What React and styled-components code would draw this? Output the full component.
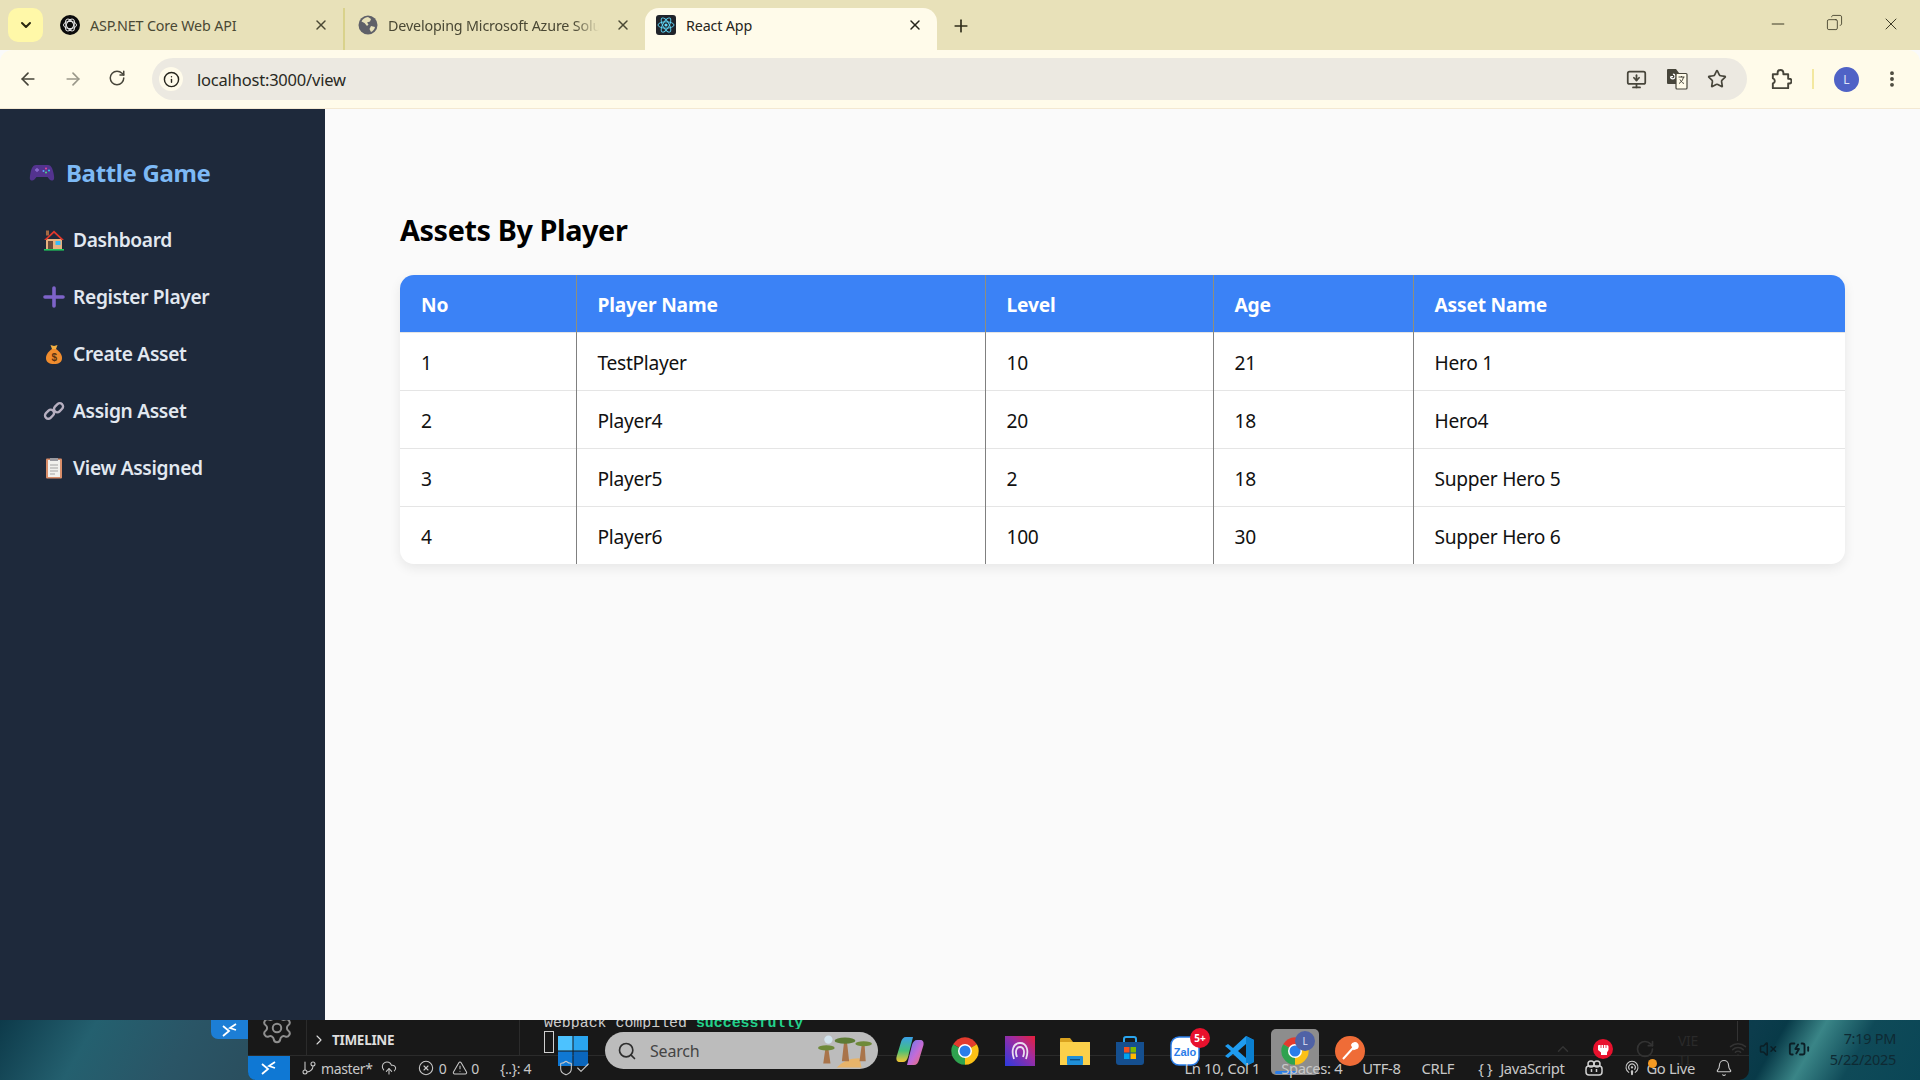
import styled, { createGlobalStyle } from 'styled-components'
import {
  ArrowLeft, ArrowRight, RotateCw, Info, Plus, X, Minus, Star, EllipsisVertical, MonitorDown,
  Search, Bell, GitBranch, CloudUpload, CircleX, TriangleAlert, ChevronRight, ChevronDown, Settings,
  Check, Shield, Podcast, VolumeX, Wifi, BatteryCharging, ChevronUp, Copy,
} from 'lucide-react'

const GlobalStyle = createGlobalStyle`
  html, body { margin: 0; padding: 0; }
  body { font-family: "Noto Sans", "Liberation Sans", sans-serif; background: #fafafa; }
`

const Screen = styled.div`
  width: 1920px;
  height: 1080px;
  display: flex;
  flex-direction: column;
  overflow: hidden;
`

/* ---------- browser chrome ---------- */

const TabStrip = styled.div`
  height: 50px;
  flex: none;
  background: #e8e1b9;
  display: flex;
  align-items: flex-end;
  padding-left: 8px;
  position: relative;
`

const TabList = styled.button`
  width: 35px;
  height: 34px;
  margin-bottom: 8px;
  border: 0;
  padding: 0;
  border-radius: 10px;
  background: #fff8a8;
  color: #29270f;
  display: flex;
  align-items: center;
  justify-content: center;
`

const Tab = styled.div`
  width: ${p => p.$w}px;
  height: 42px;
  margin-left: ${p => p.$ml || 0}px;
  box-sizing: border-box;
  padding: 0 14px 8px ${p => p.$pl || 0}px;
  display: flex;
  align-items: center;
  background: ${p => (p.$active ? '#fffbea' : 'transparent')};
  border-radius: ${p => (p.$active ? '14px 14px 0 0' : '0')};
  border-right: ${p => (p.$sep ? '2px solid #d9d28c' : '0')};
  font-size: 14.3px;
  color: ${p => (p.$active ? '#26251c' : '#4a4834')};
`

const TabLabel = styled.span`
  flex: 1;
  margin: 0 ${p => (p.$fade ? 16 : 0)}px 0 10px;
  white-space: nowrap;
  overflow: hidden;
  letter-spacing: -0.15px;
  ${p => p.$fade && 'mask-image: linear-gradient(to right, #000 88%, transparent);'}
`

const TabFavicon = styled.span`
  width: 20px;
  height: 20px;
  flex: none;
  display: flex;
  align-items: center;
  justify-content: center;
`

const NewTab = styled.span`
  margin: 0 0 14px 14px;
  height: 20px;
  color: #2f2d1a;
  display: flex;
`

const WindowControls = styled.div`
  position: absolute;
  right: 19px;
  top: 14px;
  display: flex;
  gap: 38px;
  color: #3c3a26;
`

const Toolbar = styled.div`
  height: 58px;
  flex: none;
  background: #fffbea;
  border-bottom: 1px solid #f3e8d2;
  border-radius: 12px 12px 0 0;
  display: flex;
  align-items: center;
  padding: 0 16px 0 18px;
  color: #47453a;
`

const NavButton = styled.span`
  width: 20px;
  height: 20px;
  margin-right: ${p => p.$mr || 25}px;
  display: flex;
  color: ${p => p.$dim ? '#9a988a' : '#47453a'};
`

const Omnibox = styled.div`
  flex: none;
  width: 1595px;
  height: 42px;
  margin-left: -3px;
  box-sizing: border-box;
  padding: 0 20px 0 7px;
  background: #ece9e1;
  border-radius: 21px;
  display: flex;
  align-items: center;
`

const SiteInfo = styled.span`
  width: 24px;
  height: 24px;
  background: #fffbea;
  border-radius: 50%;
  display: flex;
  align-items: center;
  justify-content: center;
  color: #26251c;
`

const Url = styled.span`
  flex: 1;
  margin-left: 14px;
  font-size: 16.5px;
  letter-spacing: -0.2px;
  color: #2a291f;
`

const OmniActions = styled.div`
  display: flex;
  gap: 19px;
  align-items: center;
`

const ToolbarEnd = styled.div`
  display: flex;
  align-items: center;
  margin-left: 22px;
  gap: 20px;
`

const Divider = styled.span`
  width: 2px;
  height: 20px;
  background: #f3e8a0;
`

const Avatar = styled.span`
  width: 25px;
  height: 25px;
  border-radius: 50%;
  background: #4f62c6;
  color: #dfe3f7;
  font-size: 12px;
  display: flex;
  align-items: center;
  justify-content: center;
`

const MenuDots = styled.span`
  margin-left: 3px;
  height: 20px;
  display: flex;
`

/* ---------- page ---------- */

const Page = styled.div`
  height: 911px;
  flex: none;
  display: flex;
  overflow: hidden;
`

const Sidebar = styled.aside`
  width: 325px;
  flex: none;
  background: #1e293b;
  box-sizing: border-box;
  padding: 43px 0 0 29px;
`

const Brand = styled.h2`
  margin: 0 0 19px;
  height: 40px;
  display: flex;
  align-items: center;
  gap: 11px;
  font-size: 24px;
  font-weight: 700;
  letter-spacing: -0.35px;
  color: #7db9f5;
`

const Nav = styled.nav`
  display: flex;
  flex-direction: column;
  padding-left: 14px;
`

const NavItem = styled.a`
  height: 57px;
  display: flex;
  align-items: center;
  gap: 8px;
  font-size: 19.2px;
  font-weight: 600;
  letter-spacing: -0.33px;
  color: #e2e8f0;
`

const NavIcon = styled.svg`
  width: 22px;
  height: 22px;
  flex: none;
`

const Main = styled.main`
  flex: 1;
  background: #fafafa;
  padding: 101px 75px 0;
`

const Heading = styled.h1`
  margin: 0 0 25px;
  height: 40px;
  line-height: 40px;
  font-size: 28.8px;
  font-weight: 700;
  letter-spacing: -0.4px;
  color: #000;
`

const TableCard = styled.div`
  width: 1445px;
  background: #fff;
  border-radius: 14px;
  overflow: hidden;
  box-shadow: 0 4px 12px rgba(0, 0, 0, 0.08);
`

const Table = styled.table`
  width: 100%;
  table-layout: fixed;
  border-collapse: collapse;
  font-size: 19.2px;
  letter-spacing: -0.3px;
`

const Th = styled.th`
  width: ${p => p.$w}px;
  height: 57px;
  box-sizing: border-box;
  padding: 2px 21px 0;
  text-align: left;
  font-weight: 700;
  letter-spacing: -0.2px;
  color: #fff;
  background: #3b82f6;
  border-left: ${p => (p.$first ? '0' : '1px solid #8f8f7c')};
`

const Td = styled.td`
  height: 58px;
  box-sizing: border-box;
  padding: 2px 21px 0;
  color: #111;
  border-top: 1px solid #e5e5e5;
  border-left: ${p => (p.$first ? '0' : '1px solid #808080')};
`

/* ---------- taskbar + vs code window behind it ---------- */

const Desktop = styled.div`
  height: 60px;
  flex: none;
  position: relative;
  display: flex;
  background: linear-gradient(120deg, #0d3a4a 0%, #24606f 5%, #2a5566 10%, #2a4f5f 14%, #0c3c4c 90%, #083a48 91.5%, #3a8587 93.5%, #0f4a58 96%, #0a4656 100%);
`

const VsCode = styled.div`
  width: 1501px;
  height: 60px;
  margin-left: 248px;
  background: #181818;
  border-radius: 0 0 10px 10px;
  display: flex;
  flex-direction: column;
  position: relative;
`

const RemoteTab = styled.div`
  position: absolute;
  left: -37px;
  top: 0;
  width: 37px;
  height: 19px;
  background: #1c7ed6;
  border-radius: 0 0 0 7px;
  color: #fff;
  display: flex;
  align-items: center;
  justify-content: center;
`

const Panels = styled.div`
  height: 35px;
  flex: none;
  display: flex;
  position: relative;
  border-bottom: 1px solid #2b2b2b;
`

const ActivityBar = styled.div`
  width: 58px;
  flex: none;
  box-sizing: border-box;
  padding: 0 0 0 12px;
  color: #8f8f8f;
  overflow: hidden;
`

const Gear = styled(Settings)`
  margin-top: -9px;
`

const SideSection = styled.div`
  width: 214px;
  flex: none;
  box-sizing: border-box;
  padding: 12px 0 0 4px;
  display: flex;
  align-items: flex-start;
  gap: 5px;
  border-left: 1px solid #2b2b2b;
  border-right: 1px solid #2b2b2b;
  color: #ddd;
  font-size: 13.5px;
  line-height: 16px;
  font-weight: 700;
  letter-spacing: -0.3px;
`

const Terminal = styled.div`
  flex: 1;
  padding-left: 24px;
  font-family: "Liberation Mono", monospace;
  font-size: 14.9px;
  color: #ccc;
`

const TerminalLine = styled.div`
  height: 9px;
  line-height: 6px;
  overflow: hidden;
`

const TerminalCursor = styled.div`
  width: 8px;
  height: 20px;
  margin-top: 2px;
  border: 1px solid #cfcfcf;
`

const Success = styled.b`
  color: #23d18b;
`

const StatusBar = styled.div`
  flex: 1;
  position: relative;
  z-index: 2;
  display: flex;
  align-items: center;
  justify-content: space-between;
  padding-right: 16px;
  font-size: 14px;
  letter-spacing: -0.35px;
  color: #c8c8c8;
`

const StatusGroup = styled.div`
  display: flex;
  align-items: center;
  height: 100%;
  font-size: ${p => p.$size || 14}px;
`

const RemoteButton = styled.span`
  width: 42px;
  height: 100%;
  background: #0f78d4;
  border-radius: 0 0 0 8px;
  color: #fff;
  display: flex;
  align-items: center;
  justify-content: center;
`

const StatusItem = styled.span`
  margin-left: ${p => p.$ml || 0}px;
  display: flex;
  align-items: center;
  gap: ${p => p.$gap || 4}px;
  white-space: nowrap;
`

const TaskIcons = styled.div`
  position: absolute;
  left: 558px;
  top: 12px;
  height: 37px;
  display: flex;
  align-items: center;
  gap: 25px;
`

const StartIcon = styled.svg`
  width: 30px;
  height: 30px;
  margin-right: -8px;
`

const SearchPill = styled.div`
  width: 273px;
  height: 37px;
  box-sizing: border-box;
  padding: 0 4px 0 12px;
  margin-right: -8px;
  border-radius: 19px;
  background: #bcbcbc;
  color: #2e2e2e;
  display: flex;
  align-items: center;
  gap: 13px;
  font-size: 16px;
  letter-spacing: -0.2px;
`

const SearchText = styled.span`
  flex: 1;
  color: #444;
`

const AppIcon = styled.span`
  width: 30px;
  height: 30px;
  flex: none;
  position: relative;
  display: flex;
  align-items: center;
  justify-content: center;
`

const ActiveTile = styled(AppIcon)`
  &::before {
    content: '';
    position: absolute;
    inset: -7px -9px -9px;
    background: #8d8d8d;
    border-radius: 5px;
  }
  &::after {
    content: '';
    position: absolute;
    left: -5px;
    bottom: -8px;
    width: 22px;
    height: 3px;
    border-radius: 2px;
    background: #2a7de9;
  }
  & > * { position: relative; }
`

const CountBadge = styled.span`
  position: absolute;
  top: -8px;
  right: -10px;
  width: 20px;
  height: 20px;
  border-radius: 50%;
  background: #e8112d;
  color: #fff;
  font-size: 10px;
  font-weight: 700;
  display: flex;
  align-items: center;
  justify-content: center;
`

const ProfileBadge = styled.span`
  position: absolute !important;
  top: -5px;
  right: -5px;
  width: 20px;
  height: 20px;
  border-radius: 50%;
  background: #4f62a6;
  color: #dfe3f7;
  font-size: 10px;
  display: flex;
  align-items: center;
  justify-content: center;
`

const Tray = styled.div`
  position: absolute;
  right: 24px;
  top: 10px;
  height: 38px;
  z-index: 3;
  display: flex;
  align-items: center;
  color: #0b1f26;
`

const TraySlot = styled.span`
  position: relative;
  margin-left: ${p => p.$ml || 0}px;
  display: flex;
  color: ${p => p.$dim ? '#333' : '#0b1f26'};
`

const OrangeDot = styled.span`
  position: absolute;
  right: -2px;
  bottom: -9px;
  width: 9px;
  height: 9px;
  border-radius: 50%;
  background: #f59a23;
`

const WifiLine = styled.span`
  position: absolute;
  left: 8px;
  top: -19px;
  width: 1px;
  height: 20px;
  background: #333;
`

const TrayClock = styled.div`
  margin-left: 20px;
  text-align: right;
  font-size: 14.5px;
  line-height: 21px;
  letter-spacing: -0.3px;
  color: #0e2a33;
`

const LangText = styled.div`
  position: absolute;
  left: 1678px;
  top: 11px;
  font-size: 14px;
  line-height: 19px;
  letter-spacing: -0.3px;
  color: #2a2a2a;
`

/* ---------- drawings ---------- */

const ChromeLogo = ({ size = 30 }) => (
  <svg width={size} height={size} viewBox="0 0 24 24">
    <path d="M12 12L2.5 6.5A11 11 0 0 1 21.5 6.5Z" fill="#e33b2e" />
    <path d="M12 12L21.5 6.5A11 11 0 0 1 12 23Z" fill="#fbc116" />
    <path d="M12 12L12 23A11 11 0 0 1 2.5 6.5Z" fill="#2fa24f" />
    <circle cx="12" cy="12" r="5.6" fill="#fff" />
    <circle cx="12" cy="12" r="4.4" fill="#2a7de9" />
  </svg>
)

const ReactFavicon = () => (
  <svg width="20" height="20" viewBox="0 0 20 20">
    <rect width="20" height="20" rx="3" fill="#20232a" />
    <g fill="none" stroke="#61dafb" strokeWidth="0.9">
      <ellipse cx="10" cy="10" rx="8" ry="3.2" />
      <ellipse cx="10" cy="10" rx="8" ry="3.2" transform="rotate(60 10 10)" />
      <ellipse cx="10" cy="10" rx="8" ry="3.2" transform="rotate(120 10 10)" />
    </g>
    <circle cx="10" cy="10" r="1.6" fill="#61dafb" />
  </svg>
)

const KnotFavicon = () => (
  <svg width="20" height="20" viewBox="0 0 20 20">
    <circle cx="10" cy="10" r="10" fill="#0b0b0b" />
    <g fill="none" stroke="#e8e8e8" strokeWidth="1">
      <ellipse cx="10" cy="10" rx="6.5" ry="3.6" />
      <ellipse cx="10" cy="10" rx="6.5" ry="3.6" transform="rotate(60 10 10)" />
      <ellipse cx="10" cy="10" rx="6.5" ry="3.6" transform="rotate(120 10 10)" />
    </g>
  </svg>
)

const GlobeFavicon = () => (
  <svg width="20" height="20" viewBox="0 0 20 20">
    <circle cx="10" cy="10" r="9.500" fill="#5f6068" />
    <path d="M10 2C7 2.500 4.500 4 3.500 6.500l3 1.500 2.500 3 1.500-1.500-1.500-2 3-1 1-2.500ZM13 11l4 1c-.5 2.500-2 4-4 5l-1.500-3Z" fill="#e8e1b9" />
  </svg>
)

const ChromePuzzle = () => (
  <svg width="23" height="23" viewBox="0 0 24 24" fill="none" stroke="currentColor" strokeWidth="2" strokeLinejoin="round">
    <path d="M4 6.500h5V5a3 3 0 0 1 6 0v1.500h5v4.700h1a2.500 2.500 0 0 1 0 5h-1V21H4v-4.800a2.800 2.800 0 0 0 0-5.400Z" />
  </svg>
)

const TranslateIcon = () => (
  <svg width="22" height="22" viewBox="0 0 22 22">
    <path d="M1 2a1 1 0 0 1 1-1h8l3 4v11H2a1 1 0 0 1-1-1Z" fill="#47453a" />
    <path d="M4.5 8.5a2.3 2.3 0 1 0 2.4-2.3M7 8.6H4.8" stroke="#fff" strokeWidth="1.2" fill="none" />
    <rect x="10" y="5.5" width="11" height="15.5" rx="1" fill="#fffbea" stroke="#47453a" strokeWidth="1.2" />
    <path d="M12.5 9h6M15.5 8v1.2M17.5 9c-.6 3-2.500 5.500-4.500 6.500M14 11.500c.8 1.800 2.200 3.300 4 4" stroke="#47453a" strokeWidth="1" fill="none" />
  </svg>
)

const GamepadIcon = () => (
  <svg width="26" height="26" viewBox="0 0 26 26">
    <path d="M7 6h12c3 0 4.500 3 5.500 8s1 7-1 7.500-3.500-1.500-5-3.500H7.500c-1.500 2-3 4-5 3.500s-2-2.500-1-7.500S4 6 7 6Z" fill="#53338f" />
    <path d="M6 11h4M8 9v4" stroke="#8a6dd0" strokeWidth="1.300" />
    <circle cx="17" cy="9.500" r="1" fill="#ec4899" />
    <circle cx="20" cy="11.500" r="1" fill="#22d3ee" />
    <circle cx="14.500" cy="12" r="1" fill="#60a5fa" />
    <circle cx="17" cy="13.500" r="1" fill="#4ade80" />
  </svg>
)

const HouseIcon = () => (
  <NavIcon viewBox="0 0 22 22">
    <rect x="3" y="1.500" width="3" height="5" fill="#a56a43" />
    <path d="M3 10h16v10H3Z" fill="#e8b27f" />
    <path d="M11 1.500L1 11h2.500L11 4l7.500 7H21Z" fill="#e0382c" />
    <rect x="5" y="12" width="5" height="8" fill="#6b4a3a" />
    <rect x="12.500" y="12" width="5" height="4" fill="#38bdf8" />
    <rect x="1" y="20" width="20" height="1.600" fill="#22c55e" />
  </NavIcon>
)

const PlusIcon = () => (
  <NavIcon viewBox="0 0 22 22">
    <path d="M11 2v18M2 11h18" stroke="#7d63c9" strokeWidth="3.600" strokeLinecap="round" />
  </NavIcon>
)

const MoneyIcon = () => (
  <NavIcon viewBox="0 0 22 22">
    <path d="M7.500 2l3.500 1 3.500-1-1.500 4H9Z" fill="#f5b041" />
    <path d="M9 6h4c3 2 6 5 6 9 0 4-3 6-8 6s-8-2-8-6c0-4 3-7 6-9Z" fill="#f08c2e" />
    <text x="11" y="18" textAnchor="middle" fontSize="10" fontWeight="700" fill="#5b3312" fontFamily="Liberation Sans">$</text>
  </NavIcon>
)

const LinkIcon = () => (
  <NavIcon viewBox="0 0 22 22" fill="none" stroke="#b7afc0" strokeWidth="2.400">
    <rect x="1.500" y="11" width="10" height="6.500" rx="3.200" transform="rotate(-45 6.500 14.200)" />
    <rect x="10.500" y="4.500" width="10" height="6.500" rx="3.200" transform="rotate(-45 15.500 7.700)" />
  </NavIcon>
)

const ClipboardIcon = () => (
  <NavIcon viewBox="0 0 22 22">
    <rect x="3" y="1.500" width="16" height="20" rx="1" fill="#d98e6a" />
    <rect x="5" y="3" width="12" height="17" fill="#f1f1ee" />
    <rect x="7" y="1" width="8" height="3" fill="#9a9aa0" />
    <path d="M7 8h8M7 11h8M7 14h8M7 17h5" stroke="#a3a3a3" strokeWidth="1" />
  </NavIcon>
)

const RemoteIcon = () => (
  <svg width="18" height="16" viewBox="0 0 18 16" fill="none" stroke="#fff" strokeWidth="1.800">
    <path d="M2 4l6 5-6 5" />
    <path d="M15 2l-6 4 6 2" />
  </svg>
)

const Start = () => (
  <StartIcon viewBox="0 0 30 30">
    <rect x="0" y="0" width="14.500" height="14.500" fill="#4cc2ff" />
    <rect x="15.500" y="0" width="14.500" height="14.500" fill="#2aa5ef" />
    <rect x="0" y="15.500" width="14.500" height="14.500" fill="#0f78d4" />
    <rect x="15.500" y="15.500" width="14.500" height="14.500" fill="#0a66bd" />
  </StartIcon>
)

const TreesIcon = () => (
  <svg width="58" height="34" viewBox="0 0 56 32">
    <path d="M20 32c6-6 12-9 22-9l2 9Z" fill="#e8b46a" />
    <path d="M9 14h3l2 14H7ZM27 8h3l2 18h-7ZM44 11h3l1 15h-6Z" fill="#a9744a" />
    <ellipse cx="10" cy="13" rx="8" ry="2.500" fill="#6f8a3a" />
    <ellipse cx="28" cy="6" rx="10" ry="3" fill="#5e7c35" />
    <ellipse cx="46" cy="9" rx="8" ry="2.500" fill="#6f8a3a" />
    <circle cx="12" cy="5" r="4" fill="#d3e4ee" />
  </svg>
)

const CopilotIcon = () => (
  <svg width="30" height="30" viewBox="0 0 30 30">
    <defs>
      <linearGradient id="cpa" x1="0" y1="0" x2="0" y2="1">
        <stop offset="0" stopColor="#3aa0e8" /><stop offset="0.55" stopColor="#46c07a" /><stop offset="1" stopColor="#f4c430" />
      </linearGradient>
      <linearGradient id="cpb" x1="0" y1="0" x2="1" y2="1">
        <stop offset="0" stopColor="#5b7cf0" /><stop offset="0.55" stopColor="#c56bd6" /><stop offset="1" stopColor="#f0705a" />
      </linearGradient>
    </defs>
    <path d="M11 1h7l-5 20c-.8 3-2.500 5-5 5H5c-3 0-4-2-3.500-5L6 6c.8-3 2.500-5 5-5Z" fill="url(#cpa)" />
    <path d="M19 29h-7l5-20c.8-3 2.500-5 5-5h3c3 0 4 2 3.500 5L24 24c-.8 3-2.500 5-5 5Z" fill="url(#cpb)" />
  </svg>
)

const PurpleAppIcon = () => (
  <svg width="30" height="30" viewBox="0 0 30 30">
    <defs>
      <linearGradient id="pa" x1="0" y1="1" x2="1" y2="0">
        <stop offset="0" stopColor="#2a3be0" /><stop offset="0.6" stopColor="#a02ca0" /><stop offset="1" stopColor="#e8203a" />
      </linearGradient>
    </defs>
    <rect width="30" height="30" fill="url(#pa)" />
    <path d="M9 23c-3-8-1-16 6-16s9 8 6 16M12 21c-2-5-1-10 3-10s5 5 3 10" fill="none" stroke="#e9dff0" strokeWidth="1.800" />
  </svg>
)

const FolderIcon = () => (
  <svg width="30" height="30" viewBox="0 0 30 30">
    <path d="M0 3a1 1 0 0 1 1-1h9l3 4h-13Z" fill="#d9a21f" />
    <rect y="6" width="30" height="23" fill="#fbd04a" />
    <rect x="7" y="20" width="16" height="9" rx="1" fill="#1f8fd8" />
    <rect x="10" y="23" width="10" height="1.400" fill="#0b4f86" />
  </svg>
)

const StoreIcon = () => (
  <svg width="30" height="30" viewBox="0 0 30 30">
    <path d="M9 6V3a2 2 0 0 1 2-2h8a2 2 0 0 1 2 2v3" fill="none" stroke="#2aa5ef" strokeWidth="2" />
    <path d="M1 6h28v20a3 3 0 0 1-3 3H4a3 3 0 0 1-3-3Z" fill="#154f8f" />
    <rect x="9" y="11" width="5.500" height="5.500" fill="#f25022" />
    <rect x="15.500" y="11" width="5.500" height="5.500" fill="#7fba00" />
    <rect x="9" y="17.500" width="5.500" height="5.500" fill="#00a4ef" />
    <rect x="15.500" y="17.500" width="5.500" height="5.500" fill="#ffb900" />
  </svg>
)

const ZaloIcon = () => (
  <svg width="30" height="30" viewBox="0 0 30 30">
    <rect x="1" y="1" width="28" height="28" rx="8" fill="#fff" stroke="#2a7de9" strokeWidth="1.500" />
    <text x="15" y="20" textAnchor="middle" fontSize="11" fontWeight="700" fill="#2a7de9" fontFamily="Liberation Sans">Zalo</text>
  </svg>
)

const VsCodeIcon = () => (
  <svg width="30" height="32" viewBox="0 0 30 32">
    <path d="M21 1l8 4v22l-8 4-13-12-5 4-3-2 6-5-6-5 3-2 5 4Z" fill="#1f9cf0" />
    <path d="M21 9l-8 7 8 7Z" fill="#181818" />
    <path d="M21 1l8 4v22l-8 4Z" fill="#0a7fd0" />
  </svg>
)

const PostmanIcon = () => (
  <svg width="30" height="30" viewBox="0 0 30 30">
    <circle cx="15" cy="15" r="15" fill="#ef6c37" />
    <path d="M8 23l10-11M17 9a3 3 0 0 1 5-1c1 1 1 3 0 4l-3 1Z" stroke="#fff" strokeWidth="2" fill="#fff" />
  </svg>
)

const FistIcon = () => (
  <svg width="20" height="20" viewBox="0 0 20 20">
    <circle cx="10" cy="10" r="10" fill="#e8112d" />
    <path d="M5 7a1 1 0 0 1 1-1h8a1.500 1.500 0 0 1 1.500 1.500V11l-1.500 2.500V16H8v-2.500L5 11Z" fill="#fff" />
    <path d="M8 6v3M10.500 6v3M13 6v3" stroke="#e8112d" strokeWidth="0.800" />
  </svg>
)

const BotIcon = () => (
  <svg width="20" height="20" viewBox="0 0 20 20" fill="none" stroke="#d0d0d0" strokeWidth="1.500">
    <rect x="2" y="8" width="16" height="9" rx="3" />
    <circle cx="7" cy="6" r="3" />
    <circle cx="13" cy="6" r="3" />
    <path d="M7.500 11v3M12.500 11v3" />
  </svg>
)

const tabIcon = { size: 16, strokeWidth: 2.2 }
const statusIcon = { size: 16, strokeWidth: 1.6 }

const navItems = [
  { label: 'Dashboard', Icon: HouseIcon },
  { label: 'Register Player', Icon: PlusIcon },
  { label: 'Create Asset', Icon: MoneyIcon },
  { label: 'Assign Asset', Icon: LinkIcon },
  { label: 'View Assigned', Icon: ClipboardIcon },
]

const columns = [
  { label: 'No', w: 176 },
  { label: 'Player Name', w: 409 },
  { label: 'Level', w: 228 },
  { label: 'Age', w: 200 },
  { label: 'Asset Name', w: 432 },
]

const rows = [
  ['1', 'TestPlayer', '10', '21', 'Hero 1'],
  ['2', 'Player4', '20', '18', 'Hero4'],
  ['3', 'Player5', '2', '18', 'Supper Hero 5'],
  ['4', 'Player6', '100', '30', 'Supper Hero 6'],
]

const App = () => {
  return (
    <Screen>
      <GlobalStyle />

      <TabStrip>
        <TabList><ChevronDown size={16} strokeWidth={3} /></TabList>
        <Tab $w={293} $ml={9} $pl={8} $sep>
          <TabFavicon><KnotFavicon /></TabFavicon>
          <TabLabel>ASP.NET Core Web API</TabLabel>
          <X {...tabIcon} />
        </Tab>
        <Tab $w={300} $pl={13}>
          <TabFavicon><GlobeFavicon /></TabFavicon>
          <TabLabel $fade>Developing Microsoft Azure Solutions</TabLabel>
          <X {...tabIcon} />
        </Tab>
        <Tab $w={292} $active $pl={11}>
          <TabFavicon><ReactFavicon /></TabFavicon>
          <TabLabel>React App</TabLabel>
          <X {...tabIcon} />
        </Tab>
        <NewTab><Plus size={20} strokeWidth={2} /></NewTab>
        <WindowControls>
          <Minus size={20} strokeWidth={1.2} />
          <Copy size={17} strokeWidth={1.2} style={{ transform: 'scaleX(-1)' }} />
          <X size={20} strokeWidth={1.2} />
        </WindowControls>
      </TabStrip>

      <Toolbar>
        <NavButton><ArrowLeft size={20} strokeWidth={2} /></NavButton>
        <NavButton $dim><ArrowRight size={20} strokeWidth={2} /></NavButton>
        <NavButton $mr={27}><RotateCw size={18} strokeWidth={2} /></NavButton>
        <Omnibox>
          <SiteInfo><Info size={17} strokeWidth={2} /></SiteInfo>
          <Url>localhost:3000/view</Url>
          <OmniActions>
            <MonitorDown size={21} strokeWidth={2} />
            <TranslateIcon />
            <Star size={20} strokeWidth={2} />
          </OmniActions>
        </Omnibox>
        <ToolbarEnd>
          <ChromePuzzle />
          <Divider />
          <Avatar>L</Avatar>
          <MenuDots><EllipsisVertical size={20} strokeWidth={2.6} /></MenuDots>
        </ToolbarEnd>
      </Toolbar>

      <Page>
        <Sidebar>
          <Brand><GamepadIcon />Battle Game</Brand>
          <Nav>
            {navItems.map(({ label, Icon }) => (
              <NavItem key={label}><Icon />{label}</NavItem>
            ))}
          </Nav>
        </Sidebar>
        <Main>
          <Heading>Assets By Player</Heading>
          <TableCard>
            <Table>
              <thead>
                <tr>
                  {columns.map((c, i) => <Th key={c.label} $w={c.w} $first={i === 0}>{c.label}</Th>)}
                </tr>
              </thead>
              <tbody>
                {rows.map(row => (
                  <tr key={row[0]}>
                    {row.map((cell, i) => <Td key={i} $first={i === 0}>{cell}</Td>)}
                  </tr>
                ))}
              </tbody>
            </Table>
          </TableCard>
        </Main>
      </Page>

      <Desktop>
        <VsCode>
          <RemoteTab><RemoteIcon /></RemoteTab>
          <Panels>
            <ActivityBar><Gear size={34} strokeWidth={1.4} /></ActivityBar>
            <SideSection><ChevronRight size={16} strokeWidth={1.6} />TIMELINE</SideSection>
            <Terminal>
              <TerminalLine>webpack compiled <Success>successfully</Success></TerminalLine>
              <TerminalCursor />
            </Terminal>
          </Panels>
          <StatusBar>
            <StatusGroup>
              <RemoteButton><RemoteIcon /></RemoteButton>
              <StatusItem $ml={11}><GitBranch {...statusIcon} />master*</StatusItem>
              <StatusItem $ml={8}><CloudUpload {...statusIcon} /></StatusItem>
              <StatusItem $ml={21} $gap={5}><CircleX {...statusIcon} />0</StatusItem>
              <StatusItem $ml={6} $gap={3}><TriangleAlert {...statusIcon} />0</StatusItem>
              <StatusItem $ml={21}>{'{..}: 4'}</StatusItem>
              <StatusItem $ml={27} $gap={1}><Shield {...statusIcon} /><Check {...statusIcon} /></StatusItem>
            </StatusGroup>
            <StatusGroup $size={14.8}>
              <StatusItem>Ln 10, Col 1</StatusItem>
              <StatusItem $ml={21}>Spaces: 4</StatusItem>
              <StatusItem $ml={20}>UTF-8</StatusItem>
              <StatusItem $ml={21}>CRLF</StatusItem>
              <StatusItem $ml={24} $gap={8}><span>{'{ }'}</span>JavaScript</StatusItem>
              <StatusItem $ml={20}><BotIcon /></StatusItem>
              <StatusItem $ml={20} $gap={6}><Podcast {...statusIcon} />Go Live</StatusItem>
              <StatusItem $ml={20}><Bell size={18} strokeWidth={1.5} /></StatusItem>
            </StatusGroup>
          </StatusBar>
        </VsCode>

        <TaskIcons>
          <Start />
          <SearchPill>
            <Search size={20} strokeWidth={2} />
            <SearchText>Search</SearchText>
            <TreesIcon />
          </SearchPill>
          <AppIcon><CopilotIcon /></AppIcon>
          <AppIcon><ChromeLogo /></AppIcon>
          <AppIcon><PurpleAppIcon /></AppIcon>
          <AppIcon><FolderIcon /></AppIcon>
          <AppIcon><StoreIcon /></AppIcon>
          <AppIcon><ZaloIcon /><CountBadge>5+</CountBadge></AppIcon>
          <AppIcon><VsCodeIcon /></AppIcon>
          <ActiveTile><ChromeLogo /><ProfileBadge>L</ProfileBadge></ActiveTile>
          <AppIcon><PostmanIcon /></AppIcon>
        </TaskIcons>

        <LangText>VIE<br />TI</LangText>
        <Tray>
          <TraySlot $dim><ChevronUp size={18} /></TraySlot>
          <TraySlot $ml={21}><FistIcon /></TraySlot>
          <TraySlot $ml={22} $dim><RotateCw size={20} /><OrangeDot /></TraySlot>
          <TraySlot $ml={74} $dim><WifiLine /><Wifi size={18} /></TraySlot>
          <TraySlot $ml={12}><VolumeX size={18} /></TraySlot>
          <TraySlot $ml={11}><BatteryCharging size={22} /></TraySlot>
          <TrayClock>7:19 PM<br />5/22/2025</TrayClock>
        </Tray>
      </Desktop>
    </Screen>
  )
}

export default App
